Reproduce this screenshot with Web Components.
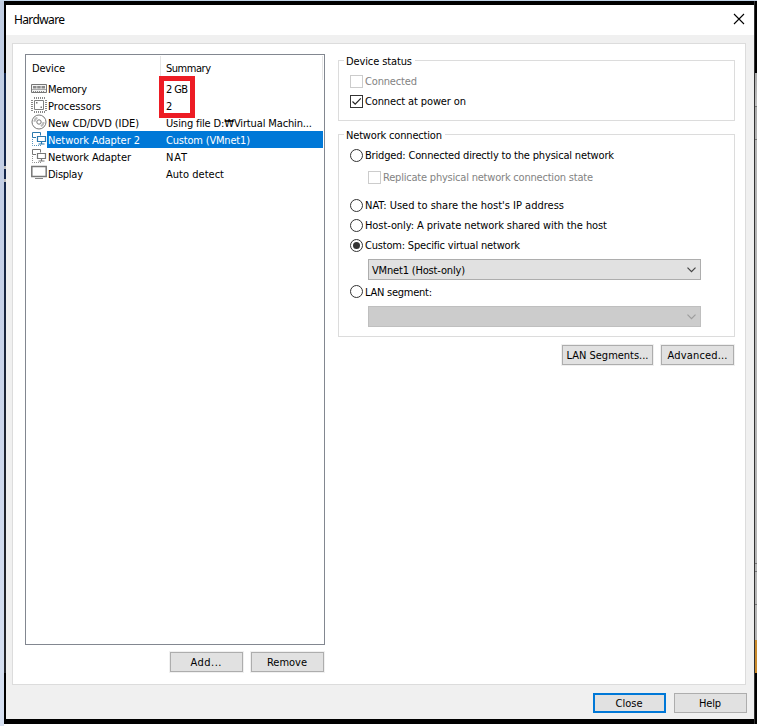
<!DOCTYPE html>
<html lang="en"><head><meta charset="utf-8"><title>Hardware</title>
<style>html,body{margin:0;width:757px;height:726px;overflow:hidden;background:#000}</style></head>
<body><hw-desktop></hw-desktop>
<script>
const FONT = '"DejaVu Sans Condensed","DejaVu Sans","Noto Sans CJK KR",sans-serif';
function define(name, html, after) {
  const t = document.createElement('template');
  t.innerHTML = html;
  customElements.define(name, class extends HTMLElement {
    connectedCallback() {
      if (this.shadowRoot) return;
      const root = this.attachShadow({mode: 'open'});
      root.append(t.content.cloneNode(true));
      if (after) after(this, root);
    }
  });
}

// Text label whose tracking is adjusted to the width given in "w".
define('hw-text', `<style>:host{display:inline-block;white-space:pre}span{display:inline-block}</style><span><slot></slot></span>`, (el, root) => {
  const w = +el.getAttribute('w'), s = root.querySelector('span');
  const n = el.textContent.length;
  if (!w || n < 2) return;
  const ls = (w - s.getBoundingClientRect().width) / (n - 1);
  s.style.letterSpacing = ls + 'px';
  s.style.marginRight = -ls + 'px';
});

define('hw-button', `<style>
:host{display:flex;box-sizing:border-box;width:73px;height:20px;border:1px solid #adadad;background:#e1e1e1;box-shadow:0 0 0 1px #f0f0f0;align-items:center;justify-content:center;color:#000;outline:0}
:host([primary]){border:2px solid #0078d7}
</style><slot></slot>`);

define('hw-check', `<style>
:host{display:flex;align-items:center;height:20px;gap:2px;color:#000}
:host([disabled]){color:#838383}
i{box-sizing:border-box;width:13px;height:13px;border:1px solid #333;background:#fff;display:block}
:host([disabled]) i{border-color:#ccc}
svg{display:none}:host([checked]) svg{display:block}
</style><i><svg width="11" height="11"><path d="M1.5 5.5L4.2 8.2L9.8 2.4" fill="none" stroke="#222" stroke-width="1.2"/></svg></i><slot></slot>`);

define('hw-radio', `<style>
:host{display:flex;align-items:center;height:20px;gap:2px}
circle.d{display:none}:host([checked]) circle.d{display:block}
</style><svg width="13" height="13"><circle cx="6.5" cy="6.5" r="6" fill="#fff" stroke="#333"/><circle class="d" cx="6.5" cy="6.5" r="3.5" fill="#333"/></svg><slot></slot>`);

define('hw-select', `<style>
:host{display:flex;box-sizing:border-box;width:333px;height:21px;border:1px solid #adadad;background:#e1e1e1;align-items:center;justify-content:space-between;padding:0 4px 0 3px;color:#444}
:host([disabled]){background:#ccc;border-color:#bfbfbf;color:#9d9d9d}
div{color:#000;padding-top:1px}
</style><div><slot></slot></div><svg width="9" height="6"><path d="M.5 .7L4.5 4.7L8.5 .7" fill="none" stroke="currentColor" stroke-width="1.2"/></svg>`);

define('hw-group', `<style>
:host{display:block;box-sizing:border-box;border:1px solid #dcdcdc}
header{height:14px;margin:-7px 0 0 5px;width:max-content;background:#fff;padding:0 3px 0 2px;line-height:16px}
</style><header><slot name="title"></slot></header><slot></slot>`);

const ICONS = {
  memory: `<path d="M.5 4.500h15v8h-15z" fill="#f4f4f4" stroke="#777"/><path d="M2 6h3.500v2.500h-3.500zM6.200 6h3.500v2.500h-3.500zM10.500 6h3.500v2.500h-3.500z" fill="#8a8a8a"/><path d="M1 9.500h14" stroke="#aaa"/><path d="M2 11.500h12" stroke="#888" stroke-dasharray="1 1"/>`,
  cpu: `<g fill="none" stroke="#888"><path d="M3 1h11M3 15h11" stroke-width="2" stroke-dasharray="1 1"/><path d="M1 3v11M15 3v11" stroke-width="2" stroke-dasharray="1 1"/><path d="M3.500 3.500h9v9h-9z" fill="#fff" stroke="#808080"/></g><path d="M5 5h1.500v1.500h-1.500zM9.500 9.500h1.500v1.500h-1.500z" fill="#777"/>`,
  cd: `<g fill="none" stroke="#777"><circle cx="8" cy="8" r="7"/><circle cx="8" cy="8" r="4.500" stroke="#bbb" stroke-dasharray="5 9" stroke-width="2"/><circle cx="8" cy="8" r="2.200"/></g>`,
  net: `<g fill="none" stroke="currentColor"><path d="M5 6.500h-3.500v-5h8v3"/><path d="M6.500 5.500h8v5h-8zM10.500 11v2M7.500 13h6" fill="#fff" stroke-width="1.200"/><path d="M1.500 8v6.500h9" stroke-dasharray="1 1" opacity=".8"/></g>`,
  display: `<path d="M.800 1.500h14.400v10h-14.400z" fill="#fff" stroke="#777" stroke-width="1.500"/><path d="M4 13.500h8" stroke="#888"/>`
};
define('hw-row', `<style>
:host{display:grid;grid-template-columns:16px 118px 1fr;height:17px;line-height:17px;padding:0 1px 0 5px}
svg{display:block;color:#777}
.a,.b{box-sizing:border-box;padding:1px 0 0 1px;height:17px}
:host([selected]) .a,:host([selected]) .b{background:#0078d7;color:#fff}
:host([selected]) svg{color:#2b78ad}
</style><svg width="16" height="16"></svg><div class="a"><slot name="device"></slot></div><div class="b"><slot></slot></div>`,
 (el, root) => { root.querySelector('svg').innerHTML = ICONS[el.getAttribute('icon')]; });

define('hw-list', `<style>
:host{display:block;box-sizing:border-box;width:300px;height:591px;border:1px solid #828790;background:#fff;position:relative}
header{display:grid;grid-template-columns:135px 162px;height:25px}
header div{border-right:1px solid #e5e5e5;height:24px;margin-top:1px;line-height:26px;padding-left:6px}
header div+div{padding-left:5px}
.mark{position:absolute;left:133px;top:21px;width:36px;height:42px;box-sizing:border-box;border:5px solid #ed1c24}
</style><header><div><hw-text w="33">Device</hw-text></div><div><hw-text w="45">Summary</hw-text></div></header>
<hw-row icon="memory"><hw-text slot="device" w="39">Memory</hw-text><hw-text w="22">2 GB</hw-text></hw-row>
<hw-row icon="cpu"><hw-text slot="device" w="53">Processors</hw-text><hw-text>2</hw-text></hw-row>
<hw-row icon="cd"><hw-text slot="device" w="91">New CD/DVD (IDE)</hw-text><hw-text w="146">Using file D:₩Virtual Machin...</hw-text></hw-row>
<hw-row icon="net" selected><hw-text slot="device" w="92">Network Adapter 2</hw-text><hw-text w="84">Custom (VMnet1)</hw-text></hw-row>
<hw-row icon="net"><hw-text slot="device" w="83">Network Adapter</hw-text><hw-text w="21">NAT</hw-text></hw-row>
<hw-row icon="display"><hw-text slot="device" w="35">Display</hw-text><hw-text w="58">Auto detect</hw-text></hw-row>
<div class="mark"></div>`);

define('hw-settings', `<style>
:host{display:block;width:397px}
.g1{height:61px}.g2{height:203px;margin-top:13px}
.in{padding-left:11px}.sub{padding-left:29px}
.btns{display:flex;justify-content:flex-end;gap:8px;margin-top:8px;padding-right:1px}
</style>
<hw-group class="g1"><hw-text slot="title" w="66">Device status</hw-text>
<div class="in" style="padding-top:3px"><hw-check disabled><hw-text w="52">Connected</hw-text></hw-check><hw-check checked><hw-text w="101">Connect at power on</hw-text></hw-check></div></hw-group>
<hw-group class="g2"><hw-text slot="title" w="96">Network connection</hw-text>
<div class="in" style="padding-top:3px"><hw-radio><hw-text w="249">Bridged: Connected directly to the physical network</hw-text></hw-radio></div>
<div class="sub" style="padding:2px 0 8px 29px"><hw-check disabled><hw-text w="210">Replicate physical network connection state</hw-text></hw-check></div>
<div class="in"><hw-radio><hw-text w="199">NAT: Used to share the host's IP address</hw-text></hw-radio><hw-radio><hw-text w="242">Host-only: A private network shared with the host</hw-text></hw-radio><hw-radio checked><hw-text w="155">Custom: Specific virtual network</hw-text></hw-radio></div>
<div class="sub" style="padding-top:4px"><hw-select><hw-text w="93">VMnet1 (Host-only)</hw-text></hw-select></div>
<div class="in" style="padding-top:1px"><hw-radio><hw-text w="67" style="padding-top:2px">LAN segment:</hw-text></hw-radio></div>
<div class="sub" style="padding-top:5px"><hw-select disabled></hw-select></div></hw-group>
<div class="btns"><hw-button style="width:91px"><hw-text w="82">LAN Segments...</hw-text></hw-button><hw-button><hw-text w="60">Advanced...</hw-text></hw-button></div>`);

define('hw-window', `<style>
:host{display:flex;flex-direction:column;box-sizing:border-box;width:748px;height:714px;background:#f0f0f0}
.title{box-sizing:border-box;height:30px;background:#fff;display:flex;align-items:center;justify-content:space-between;padding:0 9px 2px 8px;font:12px "Noto Sans","Open Sans",sans-serif}
.panel{box-sizing:border-box;width:734px;height:642px;margin:8px 0 0 6px;border:1px solid #dcdcdc;background:#fff;display:flex;gap:13px;padding:10px 0 0 12px}
.btns{display:flex;justify-content:flex-end;gap:8px}
.list .btns{margin-top:7px;padding-right:1px}
.foot{padding:8px 7px 0 0}
.btns hw-text{margin-right:1px}
hw-settings{margin-top:6px}
</style>
<div class="title"><hw-text w="51">Hardware</hw-text><svg width="12" height="12"><path d="M1 1L11 11M11 1L1 11" stroke="#000" stroke-width="1.1"/></svg></div>
<div class="panel"><div class="list"><hw-list></hw-list><div class="btns"><hw-button><hw-text w="31">Add...</hw-text></hw-button><hw-button><hw-text w="40">Remove</hw-text></hw-button></div></div><hw-settings></hw-settings></div>
<div class="btns foot"><hw-button primary style="box-shadow:none"><hw-text w="27">Close</hw-text></hw-button><hw-button style="box-shadow:none"><hw-text w="22">Help</hw-text></hw-button></div>`);

define('hw-desktop', `<style>
:host{display:grid;grid-template-columns:4px 2px 748px 3px;grid-template-rows:1px 723px 2px;width:757px;height:726px;font:11px ${FONT};color:#000;background:#000}
.top{grid-column:1/-1;background:#c3d5e8}
.l{grid-row:2/4;background:linear-gradient(#c0cde2,#c5d0e7 35%,#d7e1f2)}
.edge{background:linear-gradient(#000 72px,#14274b 72px,#14274b 165px,#bbb 165px,#bbb 168px,#14274b 168px,#14274b 178px,#bbb 178px,#bbb 181px,#14274b 181px,#20242c 500px,#24262b 672px,#000 672px)}
.r{background:linear-gradient(#000 72px,#aaa 72px,#c0c0c0 105px,#777 105px,#777 106px,#aaa 106px,#b4b4b4 138px,#777 138px,#777 139px,#b5b5b5 139px,#b5b5b5 562px,#777 562px,#777 563px,#b5b5b5 563px,#b5b5b5 570px,#777 570px,#777 571px,#b5b5b5 571px,#b5b5b5 603px,#777 603px,#777 604px,#b5b5b5 604px,#b5b5b5 639px,#c98a2c 639px,#c98a2c 672px,#000 672px);border-left:1px solid #333}
.mid{padding-top:4px}
.b{grid-column:2/-1;background:#fff}
</style><div class="top"></div><div class="l"></div><div class="edge"></div><div class="mid"><hw-window></hw-window></div><div class="r"></div><div class="b"></div>`);
</script></body></html>
